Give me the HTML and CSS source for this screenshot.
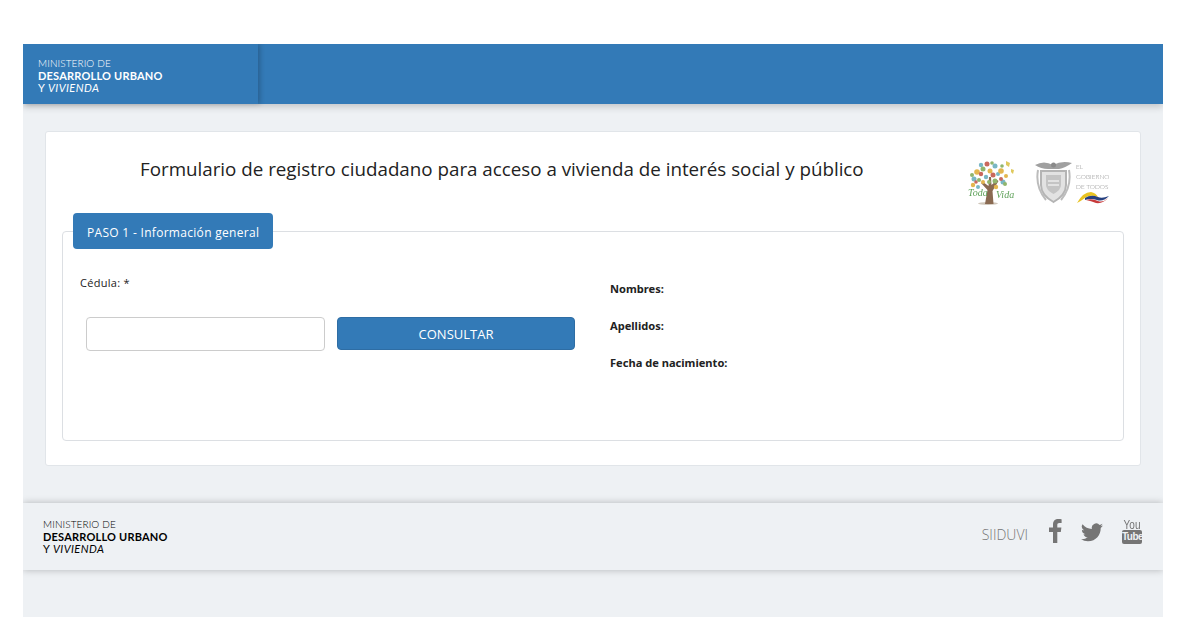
FILE: index.html
```html
<!DOCTYPE html>
<html lang="es">
<head>
<meta charset="utf-8">
<title>Registro ciudadano</title>
<link rel="stylesheet" href="styles.css">
</head>
<body>
<div class="app">
  <header class="topbar">
    <div class="brand brand-top">
      <div class="brand-text">
        <span class="b-thin">MINISTERIO DE</span>
        <span class="b-bold">DESARROLLO URBANO</span>
        <span class="b-mid">Y <i>VIVIENDA</i></span>
      </div>
    </div>
  </header>
  <main class="content">
    <section class="card">
      <div class="title-row">
        <h1 class="title">Formulario de registro ciudadano para acceso a vivienda de interés social y público</h1>
        <div class="logos">
          <svg class="logo-tree" width="48" height="46" viewBox="0 0 48 46">
            <ellipse cx="20" cy="43.500" rx="10" ry="1.500" fill="#cfc6ba"/>
            <path d="M17 44 L19.500 30 L13 23 L15 22 L20.500 26 L21 17 L23 17 L23.500 25 L29 20 L30.500 21 L24.500 31 L25.500 44 Z" fill="#8a6a52"/>
            <g fill="#79b7c4"><circle cx="6" cy="19" r="2.500"/><circle cx="13" cy="5" r="2.200"/><circle cx="27" cy="6" r="2.500"/><circle cx="35" cy="22" r="2.500"/><circle cx="18" cy="17" r="2.200"/><circle cx="10" cy="27" r="2"/><circle cx="30" cy="14" r="2"/></g>
            <g fill="#e3b64f"><circle cx="9" cy="12" r="2.800"/><circle cx="33" cy="11" r="2.800"/><circle cx="5" cy="25" r="2.200"/><circle cx="22" cy="11" r="2.500"/><circle cx="28" cy="27" r="2.200"/><circle cx="15" cy="22" r="2"/><circle cx="38" cy="16" r="2"/></g>
            <g fill="#c9685c"><circle cx="19" cy="4" r="2.500"/><circle cx="25" cy="15" r="2.500"/><circle cx="13" cy="14" r="2.200"/><circle cx="33" cy="19" r="2"/><circle cx="8" cy="22" r="1.800"/></g>
            <g fill="#90b56d"><circle cx="15" cy="9" r="2.500"/><circle cx="27" cy="21" r="2.500"/><circle cx="37" cy="24" r="2"/><circle cx="21" cy="22" r="2"/><circle cx="4" cy="15" r="2"/><circle cx="24" cy="3" r="1.800"/><circle cx="34" cy="6" r="1.800"/><circle cx="11" cy="20" r="2"/></g>
            <path d="M38 1 l4 2 -1 4 -3 -2 Z M43 9 l3 1 -1 4 -2 -2 Z" fill="#dfc95d"/>
            <text x="0" y="36" class="tree-word">Toda</text>
            <text x="28" y="38" class="tree-word">Vida</text>
          </svg>
          <svg class="logo-arms" width="38" height="46" viewBox="0 0 38 46">
            <path d="M0 5 Q9 0 18 5 Q27 0 37 3 Q30 8 24 9 L13 9 Q6 9 0 5 Z" fill="#a0a0a0"/>
            <circle cx="18.500" cy="5" r="2.500" fill="#8a8a8a"/>
            <path d="M6 11 L6 25 Q6 35 18.500 42 Q31 35 31 25 L31 11 Z" fill="#e2e2e2" stroke="#b4b4b4" stroke-width="2"/>
            <path d="M11 15 H26 V25 Q26 30 18.500 34 Q11 30 11 25 Z" fill="#c4c4c4"/>
            <path d="M13 21 H24 M13 25 H24" stroke="#ececec" stroke-width="1.500"/>
            <path d="M3 10 Q0 27 11 40 M34 10 Q37 27 26 40" fill="none" stroke="#bcbcbc" stroke-width="2"/>
          </svg>
          <div class="gov">
            <span class="gov-text">EL<br>GOBIERNO<br>DE TODOS</span>
            <svg class="gov-flag" width="34" height="14" viewBox="0 0 34 14">
              <path d="M1 13 Q7 2 15 2 Q20 3 22 7 Q14 4 9 8 Q5 11 1 13 Z" fill="#e9c322"/>
              <path d="M9 8 Q15 4 22 7 Q26 9 33 6 Q27 12 21 10 Q15 8 9 10 Z" fill="#26407f"/>
              <path d="M10 10 Q16 8 22 11 Q27 13 32 8 Q27 14 20 13 Q15 11 10 10 Z" fill="#c73a3a"/>
            </svg>
          </div>
        </div>
      </div>
      <fieldset class="step">
        <legend class="step-tab">PASO 1 - Información general</legend>
        <div class="step-body">
          <div class="col-left">
            <label class="id-label" for="cedula">Cédula: *</label>
            <div class="id-row">
              <input class="id-input" id="cedula" type="text">
              <button class="btn" type="button">CONSULTAR</button>
            </div>
          </div>
          <div class="col-right">
            <p class="info">Nombres:</p>
            <p class="info">Apellidos:</p>
            <p class="info">Fecha de nacimiento:</p>
          </div>
        </div>
      </fieldset>
    </section>
  </main>
  <footer class="footer">
    <div class="brand-text brand-foot">
      <span class="b-thin">MINISTERIO DE</span>
      <span class="b-bold">DESARROLLO URBANO</span>
      <span class="b-mid">Y <i>VIVIENDA</i></span>
    </div>
    <div class="social">
      <span class="siiduvi">SIIDUVI</span>
      <svg class="ico-f" width="13" height="24" viewBox="0 0 13 24"><path d="M4 24 V13 H0 V8.500 H4 V5.500 C4 1.800 6.200 0 9.300 0 C10.800 0 12.200 .2 12.600 .3 V4 H10.400 C8.700 4 8.300 4.800 8.300 6 V8.500 H12.400 L11.800 13 H8.300 V24 Z" fill="#757575"/></svg>
      <svg class="ico-t" width="22" height="19" viewBox="0 0 24 20"><path d="M24 2.400 a9.800 9.800 0 0 1-2.800.8 4.900 4.900 0 0 0 2.200-2.700 9.800 9.800 0 0 1-3.100 1.200 4.900 4.900 0 0 0-8.400 4.500 A14 14 0 0 1 1.700 1 a4.900 4.900 0 0 0 1.500 6.600 4.900 4.900 0 0 1-2.200-.6 4.900 4.900 0 0 0 3.900 4.800 4.900 4.900 0 0 1-2.200.1 4.900 4.900 0 0 0 4.600 3.400 A9.900 9.900 0 0 1 0 17.400 14 14 0 0 0 7.500 19.600 c9.100 0 14-7.500 14-14 v-.6 A10 10 0 0 0 24 2.400 Z" fill="#757575"/></svg>
      <div class="ico-yt">
        <span class="yt-you">You</span>
        <span class="yt-tube">Tube</span>
      </div>
    </div>
  </footer>
  <div class="bottom"></div>
</div>
</body>
</html>
```

FILE: styles.css
```css
* { box-sizing: border-box; }
html, body { margin: 0; padding: 0; background: #fff; }
body {
  height: 617px;
  overflow: hidden;
  padding: 44px 38px 0 23px;
  font-family: "Open Sans", "Noto Sans", sans-serif;
  color: #222;
}
.app {
  height: 573px;
  background: #eef1f4;
  display: flex;
  flex-direction: column;
  overflow: hidden;
}
.topbar {
  height: 60px;
  flex: none;
  background: #337ab7;
  box-shadow: 0 3px 7px rgba(0, 0, 0, .18);
  position: relative;
}
.brand-top {
  width: 235px;
  height: 60px;
  padding: 13px 0 0 15px;
  box-shadow: 2px 0 5px rgba(0, 0, 0, .22);
  color: #fff;
}
.brand-text {
  display: flex;
  flex-direction: column;
  font-family: Lato, sans-serif;
  font-size: 11px;
  line-height: 12.500px;
  white-space: nowrap;
}
.b-thin { font-weight: 300; font-size: 10px; letter-spacing: .1px; }
.b-bold { font-weight: 700; letter-spacing: .2px; }
.b-mid { font-weight: 400; letter-spacing: .4px; }
.content {
  flex: none;
  height: 399px;
  padding: 27px 22px 0;
}
.card {
  height: 335px;
  background: #fff;
  border: 1px solid #e1e5e9;
  border-radius: 3px;
  padding: 0 16px;
}
.title-row {
  height: 81px;
  display: flex;
}
.title {
  margin: 24px 0 0 78px;
  font-size: 18.770px;
  line-height: 26px;
  font-weight: 400;
  color: #222;
  white-space: nowrap;
}
.logos {
  margin: 28px 0 0 auto;
  padding-right: 14px;
  display: flex;
  align-items: flex-start;
  filter: blur(.4px);
}
.logo-tree { margin-right: 19px; }
.tree-word { font-family: "Liberation Serif", serif; font-style: italic; font-size: 10px; fill: #5fa25a; }
.logo-arms { margin-right: 3px; }
.gov { width: 34px; display: flex; flex-direction: column; padding-top: 2px; }
.gov-text {
  font-family: Lato, sans-serif;
  font-weight: 300;
  font-size: 6.500px;
  line-height: 10px;
  color: #8f8f8f;
  white-space: nowrap;
}
.gov-flag { margin-top: -2px; }
.step {
  height: 228px;
  margin: 0;
  padding: 0;
  min-width: 0;
  border: 1px solid #dcdfe3;
  border-radius: 4px;
}
.step-tab {
  width: 200px;
  height: 36px;
  margin: 0 0 0 10px;
  padding: 0 14px;
  background: #337ab7;
  color: #fff;
  font-size: 12px;
  line-height: 39px;
  letter-spacing: .3px;
  border-radius: 4px;
  white-space: nowrap;
}
.step-body {
  display: flex;
  padding: 26px 0 0 17px;
}
.col-left { width: 512px; flex: none; }
.id-label {
  display: block;
  font-size: 11px;
  line-height: 15px;
  letter-spacing: .3px;
}
.id-row {
  display: flex;
  gap: 12px;
  margin: 27px 0 0 6px;
}
.id-input {
  width: 239px;
  height: 34px;
  border: 1px solid #ccc;
  border-radius: 4px;
  background: #fff;
  padding: 0 8px;
}
.btn {
  width: 238px;
  height: 33px;
  border: 1px solid #2e6da4;
  border-radius: 4px;
  background: #337ab7;
  color: #fff;
  font-family: "Open Sans", sans-serif;
  font-weight: 400;
  font-size: 13px;
  padding: 0;
}
.col-right { padding: 6px 0 0 18px; }
.info {
  margin: 0 0 21px;
  font-family: "Noto Sans", sans-serif;
  font-size: 11.100px;
  line-height: 16px;
  font-weight: 700;
  color: #222;
}
.footer {
  flex: none;
  height: 67px;
  margin-top: 0;
  background: #eef1f4;
  box-shadow: 0 0 7px rgba(0, 0, 0, .25);
  display: flex;
  justify-content: space-between;
  padding: 15px 21px 0 20px;
  position: relative;
}
.brand-foot { color: #000; }
.social { display: flex; align-items: flex-start; color: #757575; padding-top: 1px; }
.siiduvi {
  font-family: "Open Sans", sans-serif;
  font-weight: 300;
  font-size: 14px;
  line-height: 20px;
  margin: 6px 21px 0 0;
}
.ico-f { margin: 0 19px 0 0; }
.ico-t { margin: 4px 19px 0 0; }
.ico-yt { width: 20px; display: flex; flex-direction: column; align-items: center; font-family: "Liberation Sans", sans-serif; }
.yt-you { font-size: 10px; line-height: 11px; transform: scaleY(1.200); color: #757575; }
.yt-tube {
  width: 20px;
  height: 14px;
  background: #757575;
  color: #eef1f4;
  border-radius: 2px;
  font-size: 10px;
  line-height: 14px;
  font-weight: 700;
  text-align: center;
  letter-spacing: -.5px;
}
.bottom { flex: 1; }
```
